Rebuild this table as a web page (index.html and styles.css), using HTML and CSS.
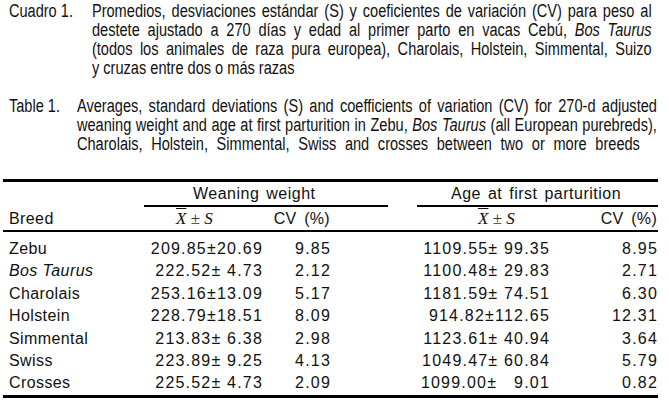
FILE: index.html
```html
<!DOCTYPE html>
<html lang="es">
<head>
<meta charset="utf-8">
<title>Cuadro 1</title>
<link rel="stylesheet" href="styles.css">
</head>
<body>
<div class="page">
  <div class="caption caption-es">
    <div class="label">Cuadro 1.</div>
    <div class="body">
      <span class="ln">Promedios, desviaciones estándar (S) y coeficientes de variación (CV) para peso al</span>
      <span class="ln">destete ajustado a 270 días y edad al primer parto en vacas Cebú, <i>Bos Taurus</i></span>
      <span class="ln">(todos los animales de raza pura europea), Charolais, Holstein, Simmental, Suizo</span>
      <span class="ln last">y cruzas entre dos o más razas</span>
    </div>
  </div>
  <div class="caption caption-en">
    <div class="label">Table 1.</div>
    <div class="body">
      <span class="ln">Averages, standard deviations (S) and coefficients of variation (CV) for 270-d adjusted</span>
      <span class="ln">weaning weight and age at first parturition in Zebu, <i>Bos Taurus</i> (all European purebreds),</span>
      <span class="ln short">Charolais, Holstein, Simmental, Swiss and crosses between two or more breeds</span>
    </div>
  </div>

  <table class="data">
    <colgroup>
      <col class="c-breed"><col class="c-wmean"><col class="c-wcv"><col class="c-gap"><col class="c-amean"><col class="c-acv">
    </colgroup>
    <thead>
      <tr class="grp-row">
        <th></th>
        <th colspan="2" class="grp grp-w">Weaning weight</th>
        <th></th>
        <th colspan="2" class="grp grp-a">Age at first parturition</th>
      </tr>
      <tr class="sub-row">
        <th class="breed">Breed</th>
        <th class="stat stat-w"><span class="xbar">X</span> <span class="pm">±</span> <span class="s">S</span></th>
        <th class="cv cv-w">CV (%)</th>
        <th></th>
        <th class="stat stat-a"><span class="xbar">X</span> <span class="pm">±</span> <span class="s">S</span></th>
        <th class="cv cv-a">CV (%)</th>
      </tr>
    </thead>
    <tbody>
      <tr class="first"><td class="breed">Zebu</td><td class="wmean">209.85±20.69</td><td class="wcv">9.85</td><td></td><td class="amean">1109.55± 99.35</td><td class="acv">8.95</td></tr>
      <tr><td class="breed"><i>Bos Taurus</i></td><td class="wmean">222.52± 4.73</td><td class="wcv">2.12</td><td></td><td class="amean">1100.48± 29.83</td><td class="acv">2.71</td></tr>
      <tr><td class="breed">Charolais</td><td class="wmean">253.16±13.09</td><td class="wcv">5.17</td><td></td><td class="amean">1181.59± 74.51</td><td class="acv">6.30</td></tr>
      <tr><td class="breed">Holstein</td><td class="wmean">228.79±18.51</td><td class="wcv">8.09</td><td></td><td class="amean">914.82±112.65</td><td class="acv">12.31</td></tr>
      <tr><td class="breed">Simmental</td><td class="wmean">213.83± 6.38</td><td class="wcv">2.98</td><td></td><td class="amean">1123.61± 40.94</td><td class="acv">3.64</td></tr>
      <tr><td class="breed">Swiss</td><td class="wmean">223.89± 9.25</td><td class="wcv">4.13</td><td></td><td class="amean">1049.47± 60.84</td><td class="acv">5.79</td></tr>
      <tr class="last"><td class="breed">Crosses</td><td class="wmean">225.52± 4.73</td><td class="wcv">2.09</td><td></td><td class="amean">1099.00±   9.01</td><td class="acv">0.82</td></tr>
    </tbody>
  </table>
</div>
</body>
</html>
```

FILE: styles.css
```css
html, body {
  margin: 0;
  padding: 0;
  background: #ffffff;
  color: #111111;
}

.page {
  width: 669px;
  padding-top: 2px;
  overflow: hidden;
}

/* captions: Arial-Narrow look = Liberation Sans compressed horizontally */
.caption {
  display: flex;
  width: 806px;
  padding-left: 11px;
  box-sizing: border-box;
  transform: scaleX(0.81);
  transform-origin: 0 0;
  font-family: "Liberation Sans", Arial, sans-serif;
  font-size: 18px;
  line-height: 19px;
}

.caption-es .label { width: 102.5px; flex: none; white-space: nowrap; }
.caption-es .body { width: 691px; flex: none; }

.caption-en { margin-top: 19px; }
.caption-en .label { width: 84px; flex: none; white-space: nowrap; }
.caption-en .body { width: 716px; flex: none; }

.ln {
  display: block;
  white-space: nowrap;
  text-align: justify;
  text-align-last: justify;
}

.ln.last { text-align-last: left; }
.ln.short { margin-right: 21px; }

/* table */
.data {
  margin: 25px 0 0 3px;
  width: 655px;
  table-layout: fixed;
  border-collapse: separate;
  border-spacing: 0;
  border-top: 3px solid #000;
  border-bottom: 3px solid #000;
  font-family: "Liberation Sans", Arial, sans-serif;
  font-size: 16px;
  letter-spacing: 1.2px;
  color: #111;
}

.c-breed { width: 141px; }
.c-wmean { width: 126px; }
.c-wcv { width: 118px; }
.c-gap { width: 29px; }
.c-amean { width: 143px; }
.c-acv { width: 98px; }

.data th,
.data td {
  padding: 0;
  font-weight: normal;
  white-space: pre;
}

.data .grp-row th {
  height: 23px;
  line-height: 23px;
  text-align: left;
  vertical-align: middle;
}

.data .grp {
  border-bottom: 2px solid #000;
  word-spacing: 2px;
  letter-spacing: 0.5px;
}

.data .grp-w { padding-left: 49px; }
.data .grp-a { padding-left: 34px; }

.data .sub-row th {
  height: 23px;
  line-height: 23px;
  border-bottom: 2px solid #000;
  vertical-align: middle;
}

.data .breed { text-align: left; padding-left: 6px; letter-spacing: 0.4px; }

.data .stat {
  text-align: left;
  font-family: "Liberation Serif", "Times New Roman", serif;
  font-size: 17px;
  letter-spacing: 0;
}
.data .stat-w { padding-left: 32px; }
.data .stat-a { padding-left: 61px; }

.xbar {
  font-style: italic;
  text-decoration: overline;
  text-decoration-thickness: 1px;
}
.s { font-style: italic; }
.pm { color: #333; }

.data .cv { text-align: right; word-spacing: 3px; letter-spacing: 0.3px; }
.data .cv-w { padding-right: 58px; }
.data .cv-a { padding-right: 1px; }

.data td {
  line-height: 22.4px;
  height: 22.4px;
  vertical-align: middle;
}

.data tr.first td { padding-top: 6px; }

.data .wmean { text-align: right; padding-right: 7px; }
.data .wcv { text-align: right; padding-right: 57px; }
.data .amean { text-align: right; padding-right: 10px; }
.data .acv { text-align: right; padding-right: 0; }
```
